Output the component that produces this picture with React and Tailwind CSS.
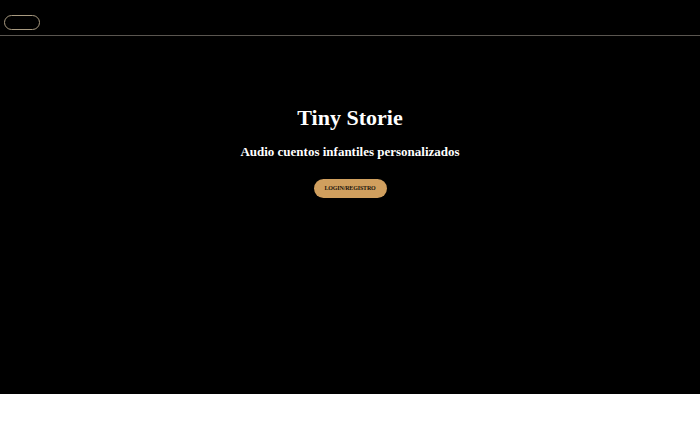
export default function App() {
  return (
    <div className="min-h-[438px] bg-white font-['Liberation_Serif',serif]">
      {/* Top bar */}
      <header className="h-9 bg-black border-b border-[#5a5650] flex items-start pt-[15px] px-1">
        <button className="w-9 h-[15px] rounded-full border border-[#a89a80] bg-transparent" />
      </header>

      {/* Hero */}
      <section className="h-[358px] bg-black flex flex-col items-center pt-[69px] text-white">
        <h1 className="text-[22px] leading-[26px] font-bold">Tiny Storie</h1>
        <h2 className="mt-[12px] text-[13px] leading-[17px] font-bold">
          Audio cuentos infantiles personalizados
        </h2>
        <button className="mt-[19px] w-[73px] h-[19px] rounded-full bg-[#d09f5e] text-[#1a140c] text-[6px] font-bold tracking-tight">
          LOGIN/REGISTRO
        </button>
      </section>
    </div>
  );
}
